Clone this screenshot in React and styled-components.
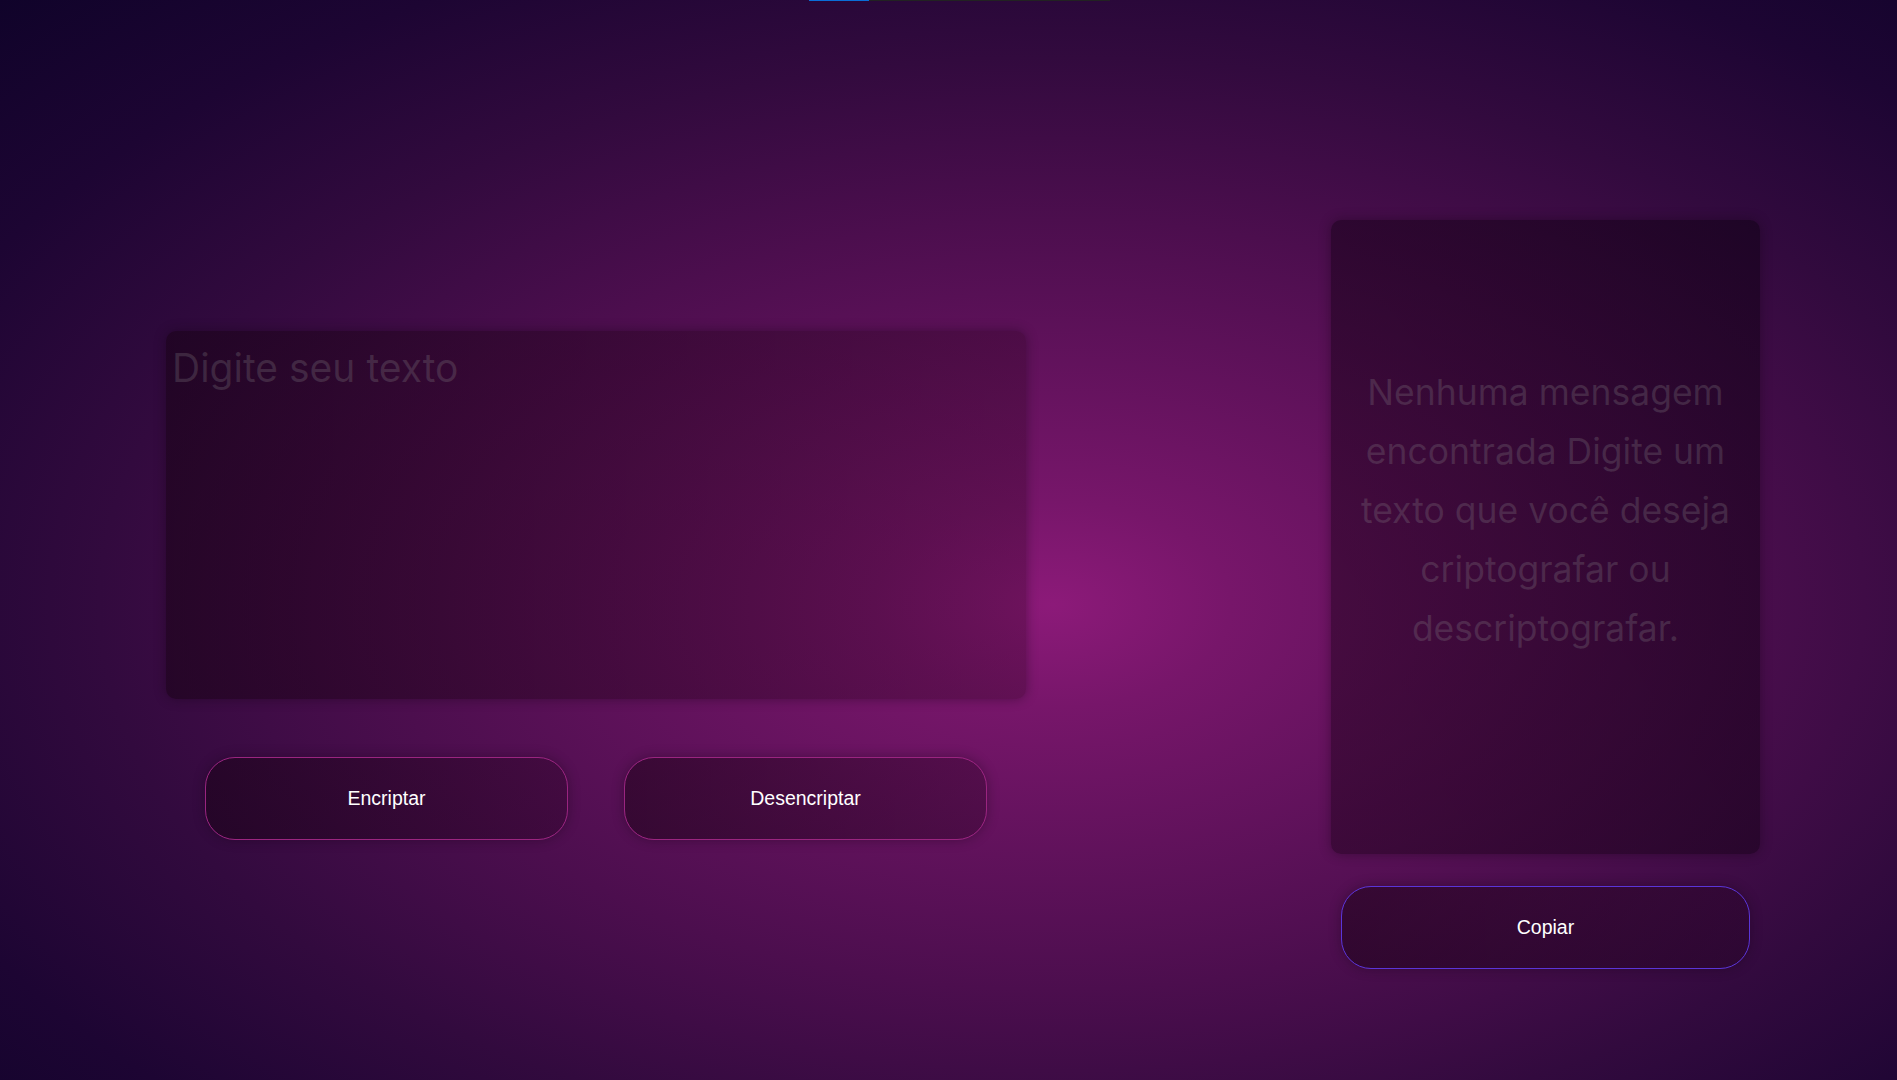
import React from 'react';
import styled, { createGlobalStyle } from 'styled-components';

const GlobalStyle = createGlobalStyle`
  * {
    box-sizing: border-box;
  }
  html, body {
    margin: 0;
    padding: 0;
  }
`;

const Page = styled.div`
  min-height: 100vh;
  background: radial-gradient(
    ellipse at 55.5% 56%,
    #8c1a79 0%,
    #77166a 12%,
    #4c0e4e 45%,
    #320a3e 64%,
    #1d0533 82%,
    #10032a 100%
  );
  font-family: 'Liberation Sans', Arial, sans-serif;
  overflow: hidden;
`;

const TopBar = styled.div`
  display: flex;
  width: 301px;
  height: 1px;
  margin-left: 809px;
  background: #222;
`;

const TopBarFill = styled.div`
  height: 100%;
  background: #0a6ed8;
`;

const Main = styled.main`
  display: flex;
  align-items: flex-start;
  gap: 305px;
  padding: 219px 0 0 166px;
`;

const LeftColumn = styled.section`
  display: flex;
  flex-direction: column;
  align-items: center;
  gap: 58px;
  width: 860px;
  margin-top: 111px;
`;

const TextInput = styled.textarea`
  width: 860px;
  height: 368px;
  padding: 13px 6px;
  border: none;
  outline: none;
  resize: none;
  border-radius: 10px;
  background: linear-gradient(to right, rgba(20, 0, 15, 0.5), rgba(35, 0, 22, 0.28));
  box-shadow: 0 0 12px rgba(20, 0, 20, 0.4);
  font-family: Inter, 'Noto Sans', sans-serif;
  font-size: 39px;
  color: rgba(140, 140, 140, 0.6);

  &::placeholder {
    color: rgba(140, 140, 140, 0.25);
  }
`;

const ButtonRow = styled.div`
  display: flex;
  gap: 56px;
`;

const Button = styled.button`
  width: ${p => p.$width}px;
  height: 83px;
  border-radius: 30px;
  border: 1px solid ${p => p.$border};
  background: linear-gradient(to right, rgba(20, 0, 15, 0.48), rgba(30, 0, 25, 0.32));
  box-shadow: 0 0 12px rgba(20, 0, 20, 0.35);
  color: #fff;
  font-family: 'Liberation Sans', Arial, sans-serif;
  font-size: 19.5px;
  cursor: pointer;
`;

const RightColumn = styled.aside`
  display: flex;
  flex-direction: column;
  align-items: center;
  gap: 32px;
  width: 429px;
`;

const OutputPanel = styled.div`
  display: flex;
  align-items: center;
  justify-content: center;
  width: 429px;
  height: 634px;
  padding: 0 24px 54px;
  border-radius: 10px;
  background: linear-gradient(to bottom left, rgba(15, 0, 20, 0.55), rgba(25, 0, 22, 0.45));
  box-shadow: 0 0 12px rgba(20, 0, 20, 0.4);
`;

const EmptyMessage = styled.p`
  margin: 0;
  text-align: center;
  font-family: Inter, 'Noto Sans', sans-serif;
  font-size: 35.5px;
  line-height: 59px;
  color: rgba(140, 140, 140, 0.25);
`;

export default function App() {
  return (
    <Page>
      <GlobalStyle />
      <TopBar>
        <TopBarFill style={{ width: '20%' }} />
      </TopBar>
      <Main>
        <LeftColumn>
          <TextInput placeholder="Digite seu texto" />
          <ButtonRow>
            <Button $width={363} $border="#9a2580">Encriptar</Button>
            <Button $width={363} $border="#9a2580">Desencriptar</Button>
          </ButtonRow>
        </LeftColumn>
        <RightColumn>
          <OutputPanel>
            <EmptyMessage>
              Nenhuma mensagem encontrada Digite um texto que você deseja criptografar ou descriptografar.
            </EmptyMessage>
          </OutputPanel>
          <Button $width={409} $border="#5a35d8">Copiar</Button>
        </RightColumn>
      </Main>
    </Page>
  );
}
